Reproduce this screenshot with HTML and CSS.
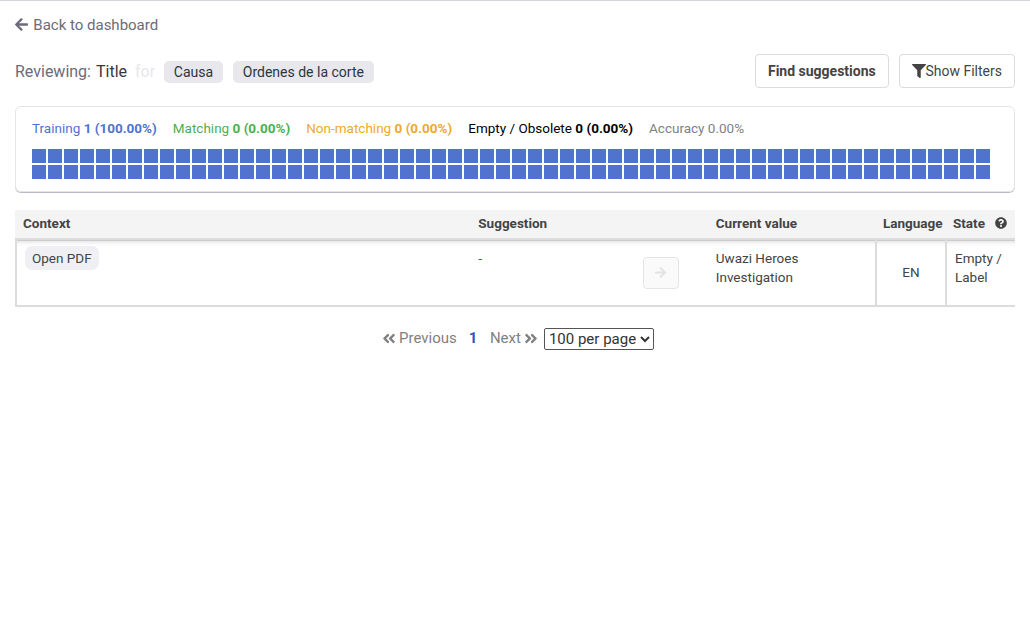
FILE: index.html
```html
<!DOCTYPE html>
<html lang="en">
<head>
<meta charset="utf-8">
<title>Suggestions</title>
<link rel="stylesheet" href="styles.css">
</head>
<body>
<svg class="defs" aria-hidden="true">
  <symbol id="arrow" viewBox="0 0 448 512"><path d="M257.5 445.1l-22.2 22.2c-9.4 9.4-24.6 9.4-33.9 0L7 273c-9.4-9.4-9.4-24.6 0-33.9L201.4 44.7c9.4-9.4 24.6-9.4 33.9 0l22.2 22.2c9.5 9.5 9.3 25-.4 34.3L136.6 216H424c13.3 0 24 10.7 24 24v32c0 13.3-10.7 24-24 24H136.6l120.5 114.8c9.8 9.3 10 24.8.4 34.3z"/></symbol>
  <symbol id="chevrons" viewBox="0 0 448 512"><path d="M223.7 239l136-136c9.4-9.4 24.6-9.4 33.9 0l22.6 22.6c9.4 9.4 9.4 24.6 0 33.9L319.9 256l96.4 96.4c9.4 9.4 9.4 24.6 0 33.9L393.7 409c-9.4 9.4-24.6 9.4-33.9 0l-136-136c-9.5-9.4-9.5-24.6-.1-34zm-192 34l136 136c9.4 9.4 24.6 9.4 33.9 0l22.6-22.6c9.4-9.4 9.4-24.6 0-33.9L127.9 256l96.4-96.4c9.4-9.4 9.4-24.6 0-33.9L201.7 103c-9.4-9.4-24.6-9.4-33.9 0l-136 136c-9.5 9.4-9.5 24.6-.1 34z"/></symbol>
</svg>
<main class="page">
  <a class="back"><svg class="icon-back"><use href="#arrow"/></svg><span>Back to dashboard</span></a>

  <header class="heading">
    <span class="reviewing">Reviewing:&nbsp;<span class="property">Title</span></span>
    <span class="for">for</span>
    <span class="template">Causa</span>
    <span class="template">Ordenes de la corte</span>
    <div class="actions">
      <button class="btn btn-find">Find suggestions</button>
      <button class="btn"><svg class="icon-filter" viewBox="0 0 512 512"><path d="M487.976 0H24.028C2.71 0-8.047 25.866 7.058 40.971L192 225.941V432c0 7.831 3.821 15.17 10.237 19.662l80 55.98C298.02 518.69 320 507.493 320 487.98V225.941l184.947-184.97C520.021 25.896 509.338 0 487.976 0z"/></svg>Show Filters</button>
    </div>
  </header>

  <section class="stats">
    <div class="legend">
      <span class="training">Training <b>1 (100.00%)</b></span>
      <span class="matching">Matching <b>0 (0.00%)</b></span>
      <span class="non-matching">Non-matching <b>0 (0.00%)</b></span>
      <span class="empty">Empty / Obsolete <b>0 (0.00%)</b></span>
      <span class="accuracy">Accuracy 0.00%</span>
    </div>
    <div class="cells" id="cells"></div>
  </section>

  <section class="table">
    <div class="row head">
      <div>Context</div>
      <div>Suggestion</div>
      <div></div>
      <div>Current value</div>
      <div>Language</div>
      <div class="state-head">State<svg class="icon-help" viewBox="0 0 512 512"><path d="M504 256c0 136.997-111.043 248-248 248S8 392.997 8 256C8 119.083 119.043 8 256 8s248 111.083 248 248zM262.655 90c-54.497 0-89.255 22.957-116.549 63.758-3.536 5.286-2.353 12.415 2.715 16.258l34.699 26.31c5.205 3.947 12.621 3.008 16.665-2.122 17.864-22.658 30.113-35.797 57.303-35.797 20.429 0 45.698 13.148 45.698 32.958 0 14.976-12.363 22.667-32.534 33.976C247.128 238.528 216 254.941 216 296v4c0 6.627 5.373 12 12 12h56c6.627 0 12-5.373 12-12v-1.333c0-28.462 83.186-29.647 83.186-106.667 0-58.002-60.165-102-116.531-102zM256 338c-25.365 0-46 20.635-46 46 0 25.364 20.635 46 46 46s46-20.636 46-46c0-25.365-20.635-46-46-46z"/></svg></div>
    </div>
    <div class="row body">
      <div class="context"><span class="open-pdf">Open PDF</span></div>
      <div class="suggestion">-</div>
      <div class="accept"><button class="btn-accept"><svg class="icon-accept flip"><use href="#arrow"/></svg></button></div>
      <div class="value">Uwazi Heroes Investigation</div>
      <div class="language">EN</div>
      <div class="state">Empty / Label</div>
    </div>
  </section>

  <nav class="pagination">
    <span class="step"><svg class="icon-step"><use href="#chevrons"/></svg>Previous</span>
    <b class="current">1</b>
    <span class="step">Next<svg class="icon-step flip"><use href="#chevrons"/></svg></span>
    <select class="size"><option>100 per page</option></select>
  </nav>
</main>
<script src="cells.js"></script>
</body>
</html>
```
FILE: styles.css
```css
* { box-sizing: border-box; }
body { margin: 0; font-family: Roboto, "Liberation Sans", sans-serif; font-size: 15px; color: #444; background: #fff; }
.defs { display: none; }
svg { fill: currentColor; flex: none; }
.flip { transform: scaleX(-1); }
.page { border-top: 1px solid #d4d4da; padding: 0 15px; height: 619px; overflow: hidden; }

.back { display: flex; align-items: center; gap: 5.3px; height: 24px; margin-top: 12px; color: #6b6b7b; }
.icon-back { width: 13px; height: 15px; margin-top: -1px; }

.heading { display: flex; align-items: center; height: 34px; margin-top: 17px; }
.reviewing { font-size: 16px; color: #6b6b7b; }
.property { color: #37373f; margin-left: 1px; }
.for { font-size: 16px; color: #e8e7ec; margin: 0 9px 0 8px; }
.template { height: 22px; line-height: 22px; margin-top: 2px; margin-right: 10px; padding: 0 10px 0 9.7px; border-radius: 5px; background: #e8e7ec; color: #2d3540; font-size: 14px; }
.actions { display: flex; gap: 10px; margin-left: auto; }
.btn { display: flex; align-items: center; height: 34px; padding: 0 12px; border: 1px solid #dcdcdc; border-radius: 4px; background: #fff; color: #444; font: 14px Roboto, sans-serif; }
.btn-find { width: 134px; padding: 0 0 0 11.7px; font-weight: 700; }
.icon-filter { width: 14px; height: 14px; margin-right: -.8px; }

.stats { height: 86px; margin-top: 18px; padding: 13px 16px 0; border: 1px solid #e5e5e8; border-radius: 6px; box-shadow: 0 1px #b9bcc3; }
.legend { display: flex; gap: 16px; height: 16px; line-height: 16px; font-size: 13.5px; white-space: nowrap; }
.training { color: #4f73cf; }
.matching { color: #4caf50; }
.non-matching { color: #eeaa2b; }
.empty { color: #000; }
.accuracy { color: #808089; }
.cells { display: grid; grid-template-columns: repeat(60, 14px); grid-auto-rows: 14px; gap: 2px; margin-top: 13px; }
.cell { background: #4f73cf; }

.table { margin-top: 18px; font-size: 13.5px; }
.row { display: grid; grid-template-columns: 455.3px 151.7px 85.8px 167.2px 70px 70px; }
.head { height: 28px; line-height: 27px; background: #f4f4f4; font-weight: 700; white-space: nowrap; }
.head > div { padding-left: 8px; }
.state-head { display: flex; align-items: flex-start; }
.icon-help { width: 12px; height: 12px; margin: 7px 0 0 10px; }
.body { height: 69px; border-top: 2px solid #dcdcdc; border-bottom: 2px solid #dcdcdc; border-left: 2px solid #dcdcdc; grid-template-columns: 453.3px 151.7px 85.8px 167.2px 70px 70px; line-height: 19px; box-shadow: inset 0 1px #ccc, inset 0 6px 5px -4px #ddd; }
.context { padding: 6px 8px; }
.open-pdf { display: inline-block; height: 24px; line-height: 25px; padding: 0 7px; border-radius: 7px; background: #f0f0f4; }
.suggestion { padding: 9px 8px; color: #2b56c1; }
.accept { padding: 17px 0 0 21px; }
.btn-accept { display: flex; align-items: center; justify-content: center; width: 36px; height: 32px; padding: 0 0 2px; border: 1px solid #e5e5e5; border-radius: 4px; background: #fafafa; color: #e2e2e2; }
.icon-accept { width: 11px; height: 13px; }
.value { padding: 9px 50px 0 8px; }
.language { display: flex; align-items: center; justify-content: center; border-left: 2px solid #dcdcdc; }
.state { padding: 9px 8px; border-left: 2px solid #dcdcdc; }

.pagination { display: flex; align-items: center; justify-content: center; height: 22px; margin-top: 21px; padding-left: 6px; }
.step, .current { margin-bottom: 2px; }
.step { display: flex; align-items: center; gap: 3px; color: #808080; }
.icon-step { width: 14px; height: 15px; }
.current { color: #2b56c1; margin-left: 12px; margin-right: 12.5px; }
.size { height: 22px; margin-left: 6px; padding: 0; border: 1px solid #555; border-radius: 2px; background: #fff; color: #333; font: 15px Roboto, sans-serif; }
```
FILE: cells.js
```js
// One square per slot of the progress board, two rows of sixty.
const board = document.getElementById('cells');
for (let i = 0; i < 120; i += 1) {
  const cell = document.createElement('span');
  cell.className = 'cell';
  board.appendChild(cell);
}
```
